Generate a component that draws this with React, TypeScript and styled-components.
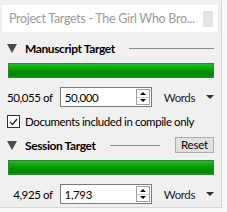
import React from "react";
import styled, { createGlobalStyle } from "styled-components";

const GlobalStyle = createGlobalStyle`
  html, body {
    margin: 0;
    padding: 0;
    background: #f8f8f8;
  }
  body {
    font-family: Lato, "Liberation Sans", Arial, sans-serif;
    font-size: 11.5px;
    letter-spacing: -0.4px;
    color: #000;
  }
`;

const Frame = styled.div`
  width: 222px;
  height: 208px;
  box-sizing: border-box;
  background: #f0f0f0;
  border-right: 1px solid #d6d6d6;
  border-bottom: 1px solid #d6d6d6;
  padding: 5px 3px 0 2px;
`;

const TitleBar = styled.div`
  height: 27px;
  background: #ffffff;
  display: flex;
  align-items: center;
  gap: 4px;
  padding: 0 5px 0 7px;
`;

const Title = styled.span`
  flex: 1;
  min-width: 0;
  overflow: hidden;
  color: #9c9c9c;
  font-size: 12.5px;
  letter-spacing: -0.3px;
  white-space: nowrap;
`;

const CloseBox = styled.span`
  flex: none;
  width: 10px;
  height: 16px;
  background: #e4e4e4;
`;

const Body = styled.div`
  padding: 7px 4px 0 5px;
`;

const Header = styled.div`
  display: flex;
  align-items: center;
  height: 18px;
  gap: 8px;
`;

const Triangle = styled.span`
  width: 0;
  height: 0;
  border-left: 5px solid transparent;
  border-right: 5px solid transparent;
  border-top: 9px solid #4a4a4a;
`;

const HeaderText = styled.span`
  font-weight: bold;
  font-size: 12px;
  letter-spacing: -0.4px;
  white-space: nowrap;
`;

const Rule = styled.span`
  flex: 1;
  height: 1px;
  background: #8c8c8c;
  margin: 0 0 0 6px;
`;

const ResetButton = styled.button`
  font-family: inherit;
  font-size: 11.5px;
  letter-spacing: -0.2px;
  height: 16px;
  width: 39px;
  padding: 0;
  margin-left: 7px;
  background: #e1e1e1;
  border: 1px solid #adadad;
  color: #000;
  line-height: 14px;
`;

const Bar = styled.div`
  margin: 6px 0 0 1px;
  height: 15px;
  box-sizing: border-box;
  border: 1px solid #2f862f;
  background: linear-gradient(#2bbb2b 0%, #0aaa0a 30%, #009000 60%, #008200 85%, #0a9a0a 100%);
`;

const Row = styled.div`
  display: flex;
  align-items: center;
  height: 20px;
  margin-top: 9px;
`;

const Count = styled.span`
  width: 53px;
  text-align: right;
  padding-right: 7px;
  box-sizing: border-box;
  white-space: nowrap;
  direction: rtl;
`;

const Spin = styled.div`
  width: 93px;
  height: 20px;
  box-sizing: border-box;
  border: 1px solid #7a7a7a;
  background: #fff;
  display: flex;
  align-items: center;
`;

const SpinValue = styled.span`
  flex: 1;
  padding-left: 4px;
`;

const SpinButtons = styled.div`
  width: 14px;
  height: 16px;
  margin-right: 1px;
  border: 1px solid #a0a0a0;
  display: flex;
  flex-direction: column;
  box-sizing: border-box;
`;

const SpinHalf = styled.div<{ $down?: boolean }>`
  flex: 1;
  display: flex;
  align-items: center;
  justify-content: center;
  ${(p) => (p.$down ? "border-top: 1px solid #c8c8c8;" : "")}
  &::after {
    content: "";
    border-left: 3px solid transparent;
    border-right: 3px solid transparent;
    ${(p) => (p.$down ? "border-top: 3px solid #000;" : "border-bottom: 3px solid #000;")}
  }
`;

const Units = styled.div`
  display: flex;
  align-items: center;
  margin-left: 12px;
  gap: 11px;
  color: #222;
`;

const Caret = styled.span`
  border-left: 4px solid transparent;
  border-right: 4px solid transparent;
  border-top: 4px solid #333;
`;

const CheckRow = styled.label`
  display: flex;
  align-items: center;
  gap: 5px;
  height: 13px;
  margin: 8px 0 8px 0;
  white-space: nowrap;
`;

const CheckBox = styled.span`
  width: 13px;
  height: 13px;
  box-sizing: border-box;
  border: 1px solid #333;
  background: #fff;
  display: flex;
  align-items: center;
  justify-content: center;
`;

function Target({ count, target }: { count: string; target: string }) {
  return (
    <Row>
      <Count>
        <bdi>{count} of</bdi>
      </Count>
      <Spin>
        <SpinValue>{target}</SpinValue>
        <SpinButtons>
          <SpinHalf />
          <SpinHalf $down />
        </SpinButtons>
      </Spin>
      <Units>
        <span>Words</span>
        <Caret />
      </Units>
    </Row>
  );
}

export default function App() {
  return (
    <>
      <GlobalStyle />
      <Frame>
        <TitleBar>
          <Title>Project Targets - The Girl Who Bro...</Title>
          <CloseBox />
        </TitleBar>
        <Body>
          <Header>
            <Triangle />
            <HeaderText>Manuscript Target</HeaderText>
            <Rule />
          </Header>
          <Bar />
          <Target count="50,055" target="50,000" />
          <CheckRow>
            <CheckBox>
              <svg width="9" height="8" viewBox="0 0 9 8">
                <path d="M1 4 L3.5 6.5 L8 1" stroke="#222" strokeWidth="1.3" fill="none" />
              </svg>
            </CheckBox>
            Documents included in compile only
          </CheckRow>
          <Header>
            <Triangle />
            <HeaderText>Session Target</HeaderText>
            <Rule />
            <ResetButton>Reset</ResetButton>
          </Header>
          <Bar />
          <Target count="4,925" target="1,793" />
        </Body>
      </Frame>
    </>
  );
}
